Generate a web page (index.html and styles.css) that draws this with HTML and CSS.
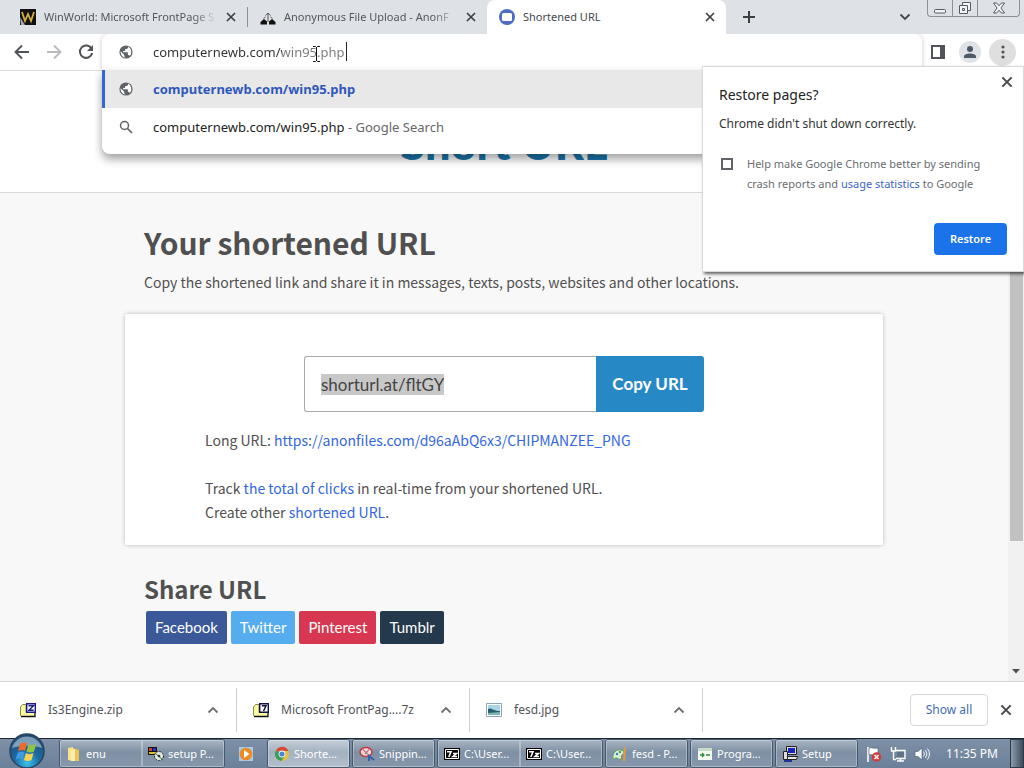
FILE: index.html
```html
<!DOCTYPE html>
<html lang="en">
<head>
<meta charset="utf-8">
<title>Shortened URL</title>
<link rel="stylesheet" href="styles.css">
</head>
<body>
<svg class="defs" width="0" height="0" aria-hidden="true">
  <symbol id="x" viewBox="0 0 12 12"><path d="M2 2l8 8M10 2l-8 8" fill="none" stroke="currentColor" stroke-width="1.7"/></symbol>
  <symbol id="up" viewBox="0 0 12 12"><path d="M1.500 8.500L6 4l4.500 4.500" fill="none" stroke="currentColor" stroke-width="1.800"/></symbol>
  <symbol id="globe" viewBox="0 0 16 16"><circle cx="8" cy="8" r="6.600" fill="#5f6368"/><path d="M2.600 7.300l3.600 3.400v1.400l1.200 1.400c-3-.2-5-2.800-4.800-6.200zM10 2.800v.8c0 .8-.6 1.400-1.400 1.400H7.200v1.300c0 .4-.3.7-.7.7H5.200v1.300h4c.4 0 .7.3.7.7v2h.7c.6 0 1 .4 1.200.9 1-1 1.500-2.400 1.500-3.900C13.300 5.600 12 3.500 10 2.800z" fill="#fff"/></symbol>
  <symbol id="sevenz" viewBox="0 0 16 16"><path d="M0 2h16v12H0z" fill="#000"/><path d="M1.500 3.500h13v9h-13z" fill="none" stroke="#fff"/><path d="M3 5.700h4L4.800 11M9 7.500h3.500L9 10.500h4" fill="none" stroke="#fff" stroke-width="1.600"/></symbol>
</svg>

<header class="tabs">
  <div class="tab">
    <svg class="icon" viewBox="0 0 16 16"><path d="M0 0h16v16H0z" fill="#111"/><path d="M2 3l3 9 3-7 3 7 3-9" fill="none" stroke="#d6ad45" stroke-width="1.800"/><path d="M0 8l5 8H1z" fill="#a8a8b4"/></svg>
    <span class="tab-title fade">WinWorld: Microsoft FrontPage S</span>
    <button class="plain" aria-label="Close tab"><svg class="i12"><use href="#x"/></svg></button>
  </div>
  <div class="tab">
    <svg class="icon" viewBox="0 0 16 16"><path d="M.5 15.500v-2.500L4 10l3 2.500v3zM15.500 15.500v-2.500L12 10l-3 2.500v3z" fill="#111"/><path d="M5.500 6.500L8 4l2.500 2.500M8 4v9M3.500 9.500L5.500 8M12.500 9.500L10.500 8" fill="none" stroke="#555"/></svg>
    <span class="tab-title fade">Anonymous File Upload - AnonF</span>
    <button class="plain" aria-label="Close tab"><svg class="i12"><use href="#x"/></svg></button>
  </div>
  <div class="tab active">
    <svg class="icon" viewBox="0 0 16 16"><circle cx="8" cy="8" r="8" fill="#4f6bc4"/><rect x="3" y="4" width="10" height="8" rx="1.500" fill="#fff"/></svg>
    <span class="tab-title">Shortened URL</span>
    <button class="plain" aria-label="Close tab"><svg class="i12"><use href="#x"/></svg></button>
  </div>
  <button class="plain newtab" aria-label="New tab"><svg width="14" height="14" viewBox="0 0 14 14"><path d="M7 1v12M1 7h12" stroke="#3c4043" stroke-width="2"/></svg></button>
  <button class="plain tabsearch" aria-label="Search tabs"><svg width="12" height="12" viewBox="0 0 12 12"><path d="M1.500 3.500L6 8l4.500-4.500" fill="none" stroke="#45494d" stroke-width="1.800"/></svg></button>
  <div class="winctl">
    <button aria-label="Minimize"><svg width="14" height="14" viewBox="0 0 14 14"><rect x="1.500" y="8.500" width="11" height="3.500" rx="1" fill="#f4f5f7" stroke="#555b63"/></svg></button>
    <button aria-label="Restore down"><svg width="14" height="14" viewBox="0 0 14 14"><path d="M4.500 1.500h8v8h-8z" fill="#f4f5f7" stroke="#555b63"/><path d="M1.500 4.500h8v8h-8z" fill="#f4f5f7" stroke="#555b63"/><path d="M4.500 7.500h2v2h-2z" fill="none" stroke="#555b63"/></svg></button>
    <button aria-label="Close"><svg width="14" height="14" viewBox="0 0 14 14"><path d="M1.500 2h3.200L7 4.800 9.300 2h3.200L9 7l3.500 5H9.300L7 9.200 4.700 12H1.500L5 7z" fill="#f4f5f7" stroke="#555b63"/></svg></button>
  </div>
</header>

<nav class="toolbar">
  <div class="navbtns">
    <button class="plain" aria-label="Back"><svg width="16" height="16" viewBox="0 0 16 16"><path d="M15 8H2M8 1.500L1.500 8 8 14.500" fill="none" stroke="#505357" stroke-width="1.900"/></svg></button>
    <button class="plain" aria-label="Forward"><svg width="16" height="16" viewBox="0 0 16 16"><path d="M1 8h13M8 1.500L14.500 8 8 14.500" fill="none" stroke="#b9bbbe" stroke-width="1.900"/></svg></button>
    <button class="plain" aria-label="Reload"><svg width="16" height="16" viewBox="0 0 16 16"><path d="M13.500 4.500A6.200 6.200 0 1 0 14.200 9" fill="none" stroke="#505357" stroke-width="2"/><path d="M15 1v6H9z" fill="#505357"/></svg></button>
  </div>
  <div class="omnibox">
    <div class="omni-row field">
      <svg class="icon"><use href="#globe"/></svg>
      <input class="url" type="text" aria-label="Address and search bar" value="computernewb.com/win95.php">
      <span class="caret"></span>
      <svg class="pointer" width="9" height="16" viewBox="0 0 9 16"><path d="M1 .5h2.500l1 1 1-1H8M1 15.500h2.500l1-1 1 1H8M4.500 1v14" fill="none" stroke="#111"/></svg>
    </div>
    <div class="omni-menu">
      <a class="omni-row chosen" href="#"><svg class="icon"><use href="#globe"/></svg><b>computernewb.com/win95.php</b></a>
      <a class="omni-row" href="#"><svg class="icon" viewBox="0 0 16 16"><circle cx="6.500" cy="6.500" r="4" fill="none" stroke="#5f6368" stroke-width="1.500"/><path d="M9.500 9.500l4.500 4.500" stroke="#5f6368" stroke-width="1.700"/></svg><span>computernewb.com/win95.php <span class="soft">- Google Search</span></span></a>
    </div>
  </div>
  <div class="tools">
    <button class="plain" aria-label="Side panel"><svg width="14" height="14" viewBox="0 0 14 14"><path d="M1 1h12v12H1z" fill="#fff" stroke="#505357" stroke-width="2"/><path d="M9 1h4v12H9z" fill="#505357"/></svg></button>
    <button class="plain round avatar" aria-label="Profile"><svg width="14" height="14" viewBox="0 0 14 14"><circle cx="7" cy="4" r="3" fill="#4d5966"/><path d="M1 13v-1.500C1 9.500 4 8.500 7 8.500s6 1 6 3V13z" fill="#4d5966"/></svg></button>
    <button class="plain round more" aria-label="Menu"><svg width="4" height="14" viewBox="0 0 4 14"><g fill="#505357"><circle cx="2" cy="2" r="1.600"/><circle cx="2" cy="7" r="1.600"/><circle cx="2" cy="12" r="1.600"/></g></svg></button>
  </div>
  <section class="dialog" role="dialog" aria-labelledby="dlg">
    <button class="plain dialog-x" aria-label="Close"><svg width="14" height="14"><use href="#x"/></svg></button>
    <h2 id="dlg">Restore pages?</h2>
    <p>Chrome didn't shut down correctly.</p>
    <div class="consent">
      <input type="checkbox" id="consent">
      <label for="consent">Help make Google Chrome better by sending crash reports and <a href="#">usage statistics</a> to Google</label>
    </div>
    <button class="restore">Restore</button>
  </section>
</nav>

<div class="view">
  <main class="site">
    <div class="brand"><a href="#">Short URL</a></div>
    <div class="wrap">
      <h1>Your shortened URL</h1>
      <p class="intro">Copy the shortened link and share it in messages, texts, posts, websites and other locations.</p>
      <section class="card">
        <form class="copy">
          <div class="copy-text"><input type="text" aria-label="Short link" value="shorturl.at/fltGY"></div>
          <button type="button">Copy URL</button>
        </form>
        <p>Long URL: <a href="#">https://anonfiles.com/d96aAbQ6x3/CHIPMANZEE_PNG</a></p>
        <p class="track">Track <a href="#">the total of clicks</a> in real-time from your shortened URL.<br>Create other <a href="#">shortened URL</a>.</p>
      </section>
      <h2>Share URL</h2>
      <div class="share">
        <a class="fb" href="#">Facebook</a><a class="tw" href="#">Twitter</a><a class="pi" href="#">Pinterest</a><a class="tu" href="#">Tumblr</a>
      </div>
    </div>
  </main>
  <div class="scroll"><span class="thumb"></span><svg width="8" height="5" viewBox="0 0 8 5"><path d="M0 0h8L4 4.500z" fill="#505050"/></svg></div>
</div>

<section class="downloads" aria-label="Downloads">
  <div class="dl">
    <svg class="icon" viewBox="0 0 16 16"><path d="M.5 5l2-2.500H6v11H.5z" fill="#fbfba0" stroke="#8a8a50"/><path d="M1 10.500h13v3.500H1z" fill="#fbfba0"/><path d="M1 14.500h14V11" fill="none" stroke="#111" stroke-width="1.300"/><path d="M6.700 1.700h8.600v8.600H6.700z" fill="#fff" stroke="#1b1b8c" stroke-width="1.400"/><path d="M8.500 3.800h5L9 8.300h4.700" fill="none" stroke="#1b1b8c" stroke-width="1.400"/></svg>
    <span>Is3Engine.zip</span><button class="plain" aria-label="More"><svg class="i12"><use href="#up"/></svg></button>
  </div>
  <div class="dl">
    <svg class="icon" viewBox="0 0 16 16"><path d="M.5 5l2-2.500H6v11H.5z" fill="#fbfba0" stroke="#8a8a50"/><path d="M1 10.500h13v3.500H1z" fill="#fbfba0"/><path d="M1 14.500h14V11" fill="none" stroke="#111" stroke-width="1.300"/><path d="M6.700 1.700h8.600v8.600H6.700z" fill="#fff" stroke="#111144" stroke-width="1.400"/><path d="M8.800 3.800h4.200L10.600 9" fill="none" stroke="#111144" stroke-width="1.500"/></svg>
    <span>Microsoft FrontPag....7z</span><button class="plain" aria-label="More"><svg class="i12"><use href="#up"/></svg></button>
  </div>
  <div class="dl">
    <svg class="icon" viewBox="0 0 16 16"><path d="M.5 1.500h15v13H.5z" fill="#fff" stroke="#8fa3b3"/><path d="M2 3h12v10H2z" fill="#a9d3e8"/><path d="M2 7c3-2 5 2 12 2v4H2z" fill="#24606b"/><path d="M2 11l12-1v3H2z" fill="#7fb6b8"/></svg>
    <span>fesd.jpg</span><button class="plain" aria-label="More"><svg class="i12"><use href="#up"/></svg></button>
  </div>
  <button class="showall">Show all</button>
  <button class="plain dl-x" aria-label="Close"><svg width="14" height="14"><use href="#x"/></svg></button>
</section>

<footer class="taskbar">
  <button class="start" aria-label="Start"><svg width="38" height="36" viewBox="0 0 38 36"><defs><radialGradient id="orb" cx=".5" cy=".85" r=".8"><stop offset="0" stop-color="#3fc4ee"/><stop offset=".45" stop-color="#1d6ba5"/><stop offset="1" stop-color="#214a70"/></radialGradient></defs><circle cx="19" cy="18" r="17" fill="url(#orb)" stroke="#2a4560" stroke-width="1.500"/><path d="M4 15a15.500 15.500 0 0 1 30 0c-9-3-20-3-30 0z" fill="#d7e8f3" opacity=".5"/><path d="M12 11c2-2 5-2 7-.5l-2 7.500c-2-1.500-5-1-7 .5z" fill="#ee6a2c"/><path d="M20.500 11c2 1.500 5 1.500 8 0l-2.500 7.500c-2.500 1.500-5.500 1-7.500 0z" fill="#8fc445"/><path d="M9.500 20c2-1.500 5-2 7-.5l-2 7c-2-1.500-5-1-7 .5z" fill="#3d9be0"/><path d="M18 20c2 1.500 5 1.500 7.500 0l-2 7c-2.500 1.500-5.500 1-7.500 0z" fill="#fbd24b"/></svg></button>
  <div class="tasks">
    <div class="group">
      <button class="task"><svg class="icon" viewBox="0 0 16 16"><path d="M2 2l5-1v14l-5-1z" fill="#f8e38d"/><path d="M7 2l6 2v11H7z" fill="#e9c558"/><path d="M5 4l4-1v12H5z" fill="#fbefb0"/></svg><span>enu</span></button>
      <button class="task"><svg class="icon" viewBox="0 0 16 16"><path d="M0 1h9v8H0z" fill="#111"/><path d="M1 2h3v3H1z" fill="#d43c2d"/><path d="M5 2h3v3H5z" fill="#2337d0"/><path d="M1 6h7v2H1z" fill="#d8c52d"/><circle cx="11" cy="10" r="4.500" fill="#dfe8df" stroke="#222" stroke-dasharray="2 1"/><path d="M7 7l8 7" fill="none" stroke="#2e7a45"/><circle cx="11" cy="10" r="1.300" fill="#333"/></svg><span>setup P...</span></button>
    </div>
    <button class="player" aria-label="Media player"><svg class="icon" viewBox="0 0 16 16"><path d="M1 1h14v14H1z" fill="#a7cbe8"/><circle cx="8" cy="8" r="6.300" fill="#f28a20"/><path d="M6 4l5.500 4L6 12z" fill="#fff"/></svg></button>
    <div class="group"><button class="task current"><svg class="icon" viewBox="0 0 16 16"><circle cx="8" cy="8" r="7" fill="#e8c33a"/><path d="M8 8L2 4.300A7 7 0 0 1 14.500 5H8z" fill="#d64a3a"/><path d="M8 8L2 4.300A7 7 0 0 0 7.500 15L11 9.500z" fill="#3c9d58"/><circle cx="8" cy="8" r="3.400" fill="#fff"/><circle cx="8" cy="8" r="2.600" fill="#4a86d8"/></svg><span>Shorte...</span></button></div>
    <div class="group"><button class="task"><svg class="icon" viewBox="0 0 16 16"><ellipse cx="7" cy="6" rx="6" ry="4.500" fill="#f3dede" stroke="#c4383c" stroke-width="1.500"/><path d="M4 3.500l6 6M10 3.500L6 8" stroke="#b7797c" stroke-width="1.200"/><path d="M9 9l6 5M10 9v6" stroke="#2f64a8" stroke-width="2"/></svg><span>Snippin...</span></button></div>
    <div class="group">
      <button class="task"><svg class="icon"><use href="#sevenz"/></svg><span>C:\User...</span></button>
      <button class="task"><svg class="icon"><use href="#sevenz"/></svg><span>C:\User...</span></button>
    </div>
    <div class="group"><button class="task"><svg class="icon" viewBox="0 0 16 16"><path d="M1 13C0 6 5 3 9 4c4 1 3 4 1 5s1 3-1 4-3-1-5-1-1 2-3 1z" fill="#d9edd2" stroke="#5d9b62"/><circle cx="5" cy="8" r="1.200" fill="#3b7ccb"/><circle cx="8" cy="6" r="1.200" fill="#3ea24f"/><path d="M12 1l2 1-1 13h-2z" fill="#e59a3e"/></svg><span>fesd - P...</span></button></div>
    <div class="group"><button class="task"><svg class="icon" viewBox="0 0 16 16"><path d="M1 2h14v12H1z" fill="#f3f8f1"/><path d="M1 2h14v3H1z" fill="#c9dccc"/><path d="M3 9h4M5 7l2 2-2 2M9 9h4" fill="none" stroke="#368c42" stroke-width="1.300"/></svg><span>Progra...</span></button></div>
    <div class="group"><button class="task"><svg class="icon" viewBox="0 0 16 16"><path d="M4.500.5h10v8h-10z" fill="#dcdcdc" stroke="#222"/><path d="M6 2h7v5H6z" fill="#1822c0"/><path d="M1.500 5.500h4v8h-4z" fill="#ddd" stroke="#222"/><path d="M5.500 10.500h10l-1 3h-9z" fill="#e8e8e8" stroke="#222"/><path d="M2 15h8" stroke="#223399" stroke-width="2"/></svg><span>Setup</span></button></div>
  </div>
  <div class="tray">
    <svg class="icon" viewBox="0 0 16 16"><path d="M2 1v15" stroke="#fff" stroke-width="1.600"/><path d="M3 2c3-1 4 1 9 0v7c-4 1-6-1-9 0z" fill="#fff" stroke="#44566a" stroke-width=".6"/><circle cx="10.500" cy="11" r="4.700" fill="#d43a36"/><path d="M8.500 9l4 4M12.500 9l-4 4" stroke="#fff" stroke-width="1.500"/></svg>
    <svg class="icon" viewBox="0 0 16 16"><path d="M5 4.500h10v8H6M7 15h7M10.500 12.500V15M1.500 1v4h4V1M3.500 5v8.500H6" fill="none" stroke="#fff" stroke-width="1.400"/><path d="M7 6h7v5H7z" fill="#5f7285"/></svg>
    <svg class="icon" viewBox="0 0 16 16"><path d="M1 5.500h3L8 2v12l-4-3.500H1z" fill="#f7f9fb" stroke="#4a5c6e" stroke-width=".6"/><path d="M9.500 5.500q2 2.500 0 5M11.500 4q3 4 0 8M13.500 2.500q4 5.500 0 11" fill="none" stroke="#f0f3f6"/></svg>
    <time>11:35 PM</time>
  </div>
  <button class="desktop" aria-label="Show desktop"></button>
</footer>
</body>
</html>
```
FILE: styles.css
```css
* { box-sizing: border-box; }
body {
  margin: 0;
  min-height: 100vh;
  display: flex;
  flex-direction: column;
  font: 12px/16px "Noto Sans", "Open Sans", sans-serif;
  color: #333;
  background: #fff;
}
a { color: #3367d6; text-decoration: none; }
button, input { font: inherit; }
h1, h2, p { margin: 0; }
.defs { position: absolute; }
.icon { width: 16px; height: 16px; flex: none; }
.i12 { width: 12px; height: 12px; }
.plain {
  border: 0; padding: 0; background: none; color: #45494d;
  display: flex; align-items: center; justify-content: center; flex: none;
}

/* tab strip */
.tabs { display: flex; height: 34px; background: #dee1e6; font-size: 11px; }
.tab {
  flex: 0 1 239px; min-width: 0;
  display: flex; align-items: center; gap: 8px;
  padding: 0 10px 0 12px;
  color: #54575b;
}
.tab:first-child { flex-basis: 248px; padding-left: 20px; border-right: 1px solid transparent; border-image: linear-gradient(transparent 8px, #8d9095 8px, #8d9095 26px, transparent 26px) 1; }
.tab.active { background: #fff; border-radius: 8px 8px 0 0; color: #45494d; }
.tab-title { flex: 1; min-width: 0; overflow: hidden; white-space: nowrap; }
.tab .i12 { color: #3c4043; }
.fade { mask-image: linear-gradient(to right, #000 calc(100% - 24px), transparent); }
.newtab { width: 46px; }
.tabsearch { width: 24px; margin-left: auto; }
.winctl {
  display: flex; align-self: flex-start; height: 17px; margin: 0 4px 0 10px;
  border: 1px solid #8c9199; border-top: 0; border-radius: 0 0 4px 4px;
}
.winctl button {
  width: 25px; padding: 0; border: 0; border-right: 1px solid #8c9199; background: none;
  display: flex; align-items: center; justify-content: center;
}
.winctl button:last-child { width: 41px; border: 0; }

/* toolbar */
.toolbar { position: relative; display: flex; height: 37px; border-bottom: 1px solid #dcdcdc; z-index: 2; }
.navbtns { display: flex; align-items: center; gap: 16px; padding: 0 8px 0 14px; }
.omnibox { position: relative; flex: 1; font-size: 13px; line-height: 20px; box-shadow: 0 0 5px rgba(0,0,0,.22); border-radius: 8px 8px 0 0; clip-path: inset(0 -8px -200px -8px); }
.omni-row { display: flex; align-items: center; gap: 19px; height: 38px; padding-left: 13px; color: #222; border-left: 3px solid transparent; }
.field { height: 36px; }
.field, .omni-menu { background: #fff; }
.field { border-radius: 8px 8px 0 0; }
.url {
  flex: 1; min-width: 0; border: 0; padding: 0; outline: 0;
  color: transparent;
  background: linear-gradient(to right, #303134 129px, #77797c 129px) text;
}
.caret { position: absolute; left: 244px; top: 8px; width: 1px; height: 19px; background: #222; }
.pointer { position: absolute; left: 210px; top: 12px; }
.soft { color: #666; }
.omni-menu {
  position: absolute; top: 36px; left: 0; right: 0;
  padding-bottom: 8px; border-radius: 0 0 8px 8px;
  box-shadow: 0 5px 10px rgba(0,0,0,.38);
}
.chosen { background: #e8e8e8; border-color: #3367d6; color: #2f57bd; }
.tools { display: flex; align-items: center; gap: 12px; padding: 0 8px 0 9px; }
.round { border-radius: 50%; }
.avatar { width: 22px; height: 22px; background: #dfe3e8; margin-left: 2px; }
.more { width: 27px; height: 27px; background: #dfdfdf; margin-left: -4px; }

/* restore dialog */
.dialog {
  position: absolute; top: 32px; right: 0; width: 322px;
  padding: 16px; background: #fff; border: 1px solid #dadada;
  box-shadow: 2px 2px 3px rgba(0,0,0,.6);
  line-height: 20px;
}
.dialog-x { position: absolute; top: 8px; right: 9px; }
.dialog h2 { font-size: 14px; line-height: 24px; font-weight: 400; color: #222; }
.dialog p { padding-top: 7px; line-height: 20px; color: #333; }
.consent { display: flex; gap: 14px; padding-top: 20px; color: #6a6c70; font-size: 11px; }
.consent a { color: #3b66cc; }
.consent input {
  appearance: none; flex: none; width: 12px; height: 12px; margin: 4px 0 0 2px;
  border: 2px solid #606367; background: #fff;
}
.restore {
  display: block; margin: 29px 0 0 auto; width: 73px; height: 32px; padding: 0;
  border: 0; border-radius: 4px; background: #1a73e8; color: #fff; font-size: 11px; font-weight: 600;
}

/* page */
.view { flex: 1; display: flex; background: #f8f8f8; }
.site { flex: 1; min-width: 0; font: 14px/24px "Noto Sans CJK SC", sans-serif; color: #505050; }
.brand {
  height: 122px; display: flex; justify-content: center; align-items: flex-end; padding-bottom: 25px;
  background: #fff; border-bottom: 1px solid #d8d8d8;
  font: 900 45px/48px Lato, sans-serif;
}
.site a { color: #3367e0; }
.site .brand a { color: #1a78ae; }
.wrap { max-width: 758px; margin: 0 auto; padding: 28px 0 37px; }
h1, .wrap h2, .intro, .share { margin: 0 19px; }
h1 { font-size: 30px; line-height: 42px; }
.intro { padding-top: 7px; }
.card {
  margin-top: 20px; padding: 42px 80px 21px;
  background: #fff; border-radius: 2px; box-shadow: 0 0 4px rgba(0,0,0,.25);
}
.copy { display: flex; max-width: 400px; height: 56px; margin: 0 auto 16px; }
.copy-text { flex: 1; min-width: 0; display: flex; align-items: center; padding: 0 16px; border: 1px solid #aaa; border-right: 0; border-radius: 3px 0 0 3px; }
.copy-text input {
  field-sizing: content; border: 0; padding: 0; height: 21px;
  background: #c8c8c8; color: #444; font: 17px/21px Lato, sans-serif;
}
.copy button { width: 108px; padding: 0; border: 0; border-radius: 0 3px 3px 0; background: #2788c6; color: #fff; font: 700 17px/24px Lato, sans-serif; }
.track { padding-top: 24px; }
.wrap h2 { padding-top: 28px; font-size: 24px; line-height: 32px; }
.share { display: flex; gap: 4px; padding: 6px 0 0 2px; font: 15px/33px Lato, sans-serif; }
.site .share a { padding: 0 9px; border-radius: 2px; color: #fff; }
.share .fb { background: #3b5998; }
.share .tw { background: #55acee; }
.share .pi { background: #d73751; }
.share .tu { background: #25394d; }
.scroll { width: 16px; display: flex; flex-direction: column; align-items: center; justify-content: space-between; padding: 17px 0 7px; background: #f1f1f1; }
.thumb { width: 13px; height: 453px; background: #c1c1c1; }

/* downloads */
.downloads { display: flex; align-items: center; height: 57px; padding-left: 3px; border-top: 1px solid #d5d5d5; color: #505357; background: #fff; }
.dl { flex: 0 1 234px; min-width: 0; display: flex; align-items: center; gap: 12px; height: 44px; padding: 0 17px; border-right: 1px solid #cfcfcf; }
.dl + .dl { flex-basis: 233px; padding-left: 16px; }
.dl span { flex: 1; min-width: 0; white-space: nowrap; }
.dl .plain { color: #6d7074; }
.showall { margin-left: auto; width: 78px; height: 32px; padding: 0; border: 1px solid #d5d7da; border-radius: 4px; background: #fff; color: #3f6db5; font-size: 12px; }
.dl-x { margin: 0 11px; }

/* taskbar */
.taskbar { display: flex; height: 30px; background: linear-gradient(#7e90a6, #6b8099); border-top: 1px solid #1c2630; color: #fff; }
.start { width: 54px; height: 35px; margin: -6px 5px 0 0; padding: 0; border: 0; background: none; position: relative; z-index: 1; flex: none; }
.start svg { display: block; margin: 0 auto; }
.tasks { flex: 1; min-width: 0; display: flex; gap: 2px; }
.group { display: flex; border: 1px solid #46586b; border-radius: 3px; overflow: hidden; flex: 0 1 auto; }
.task {
  width: 82px; min-width: 0; padding: 0 6px; border: 0;
  display: flex; align-items: center; gap: 4px;
  background: linear-gradient(#a9b5c3, #7f90a4 45%, #8798ac); color: #fff; font-size: 11px;
  box-shadow: inset 0 0 0 1px rgba(255,255,255,.3);
}
.task:only-child { width: 81px; }
.task span { white-space: nowrap; }
.current { background: linear-gradient(#c5ced8, #a3b1c0 45%, #b4bfcc); }
.player { width: 38px; padding: 0; border: 0; background: none; display: flex; align-items: center; justify-content: center; }
.tray { display: flex; align-items: center; gap: 8px; margin-right: 12px; }
.tray time { margin-left: 8px; font-size: 12px; }
.desktop { width: 14px; padding: 0; border: 1px solid #2c3a48; background: linear-gradient(90deg, #8a9bad, #3d4c5c); }
```
